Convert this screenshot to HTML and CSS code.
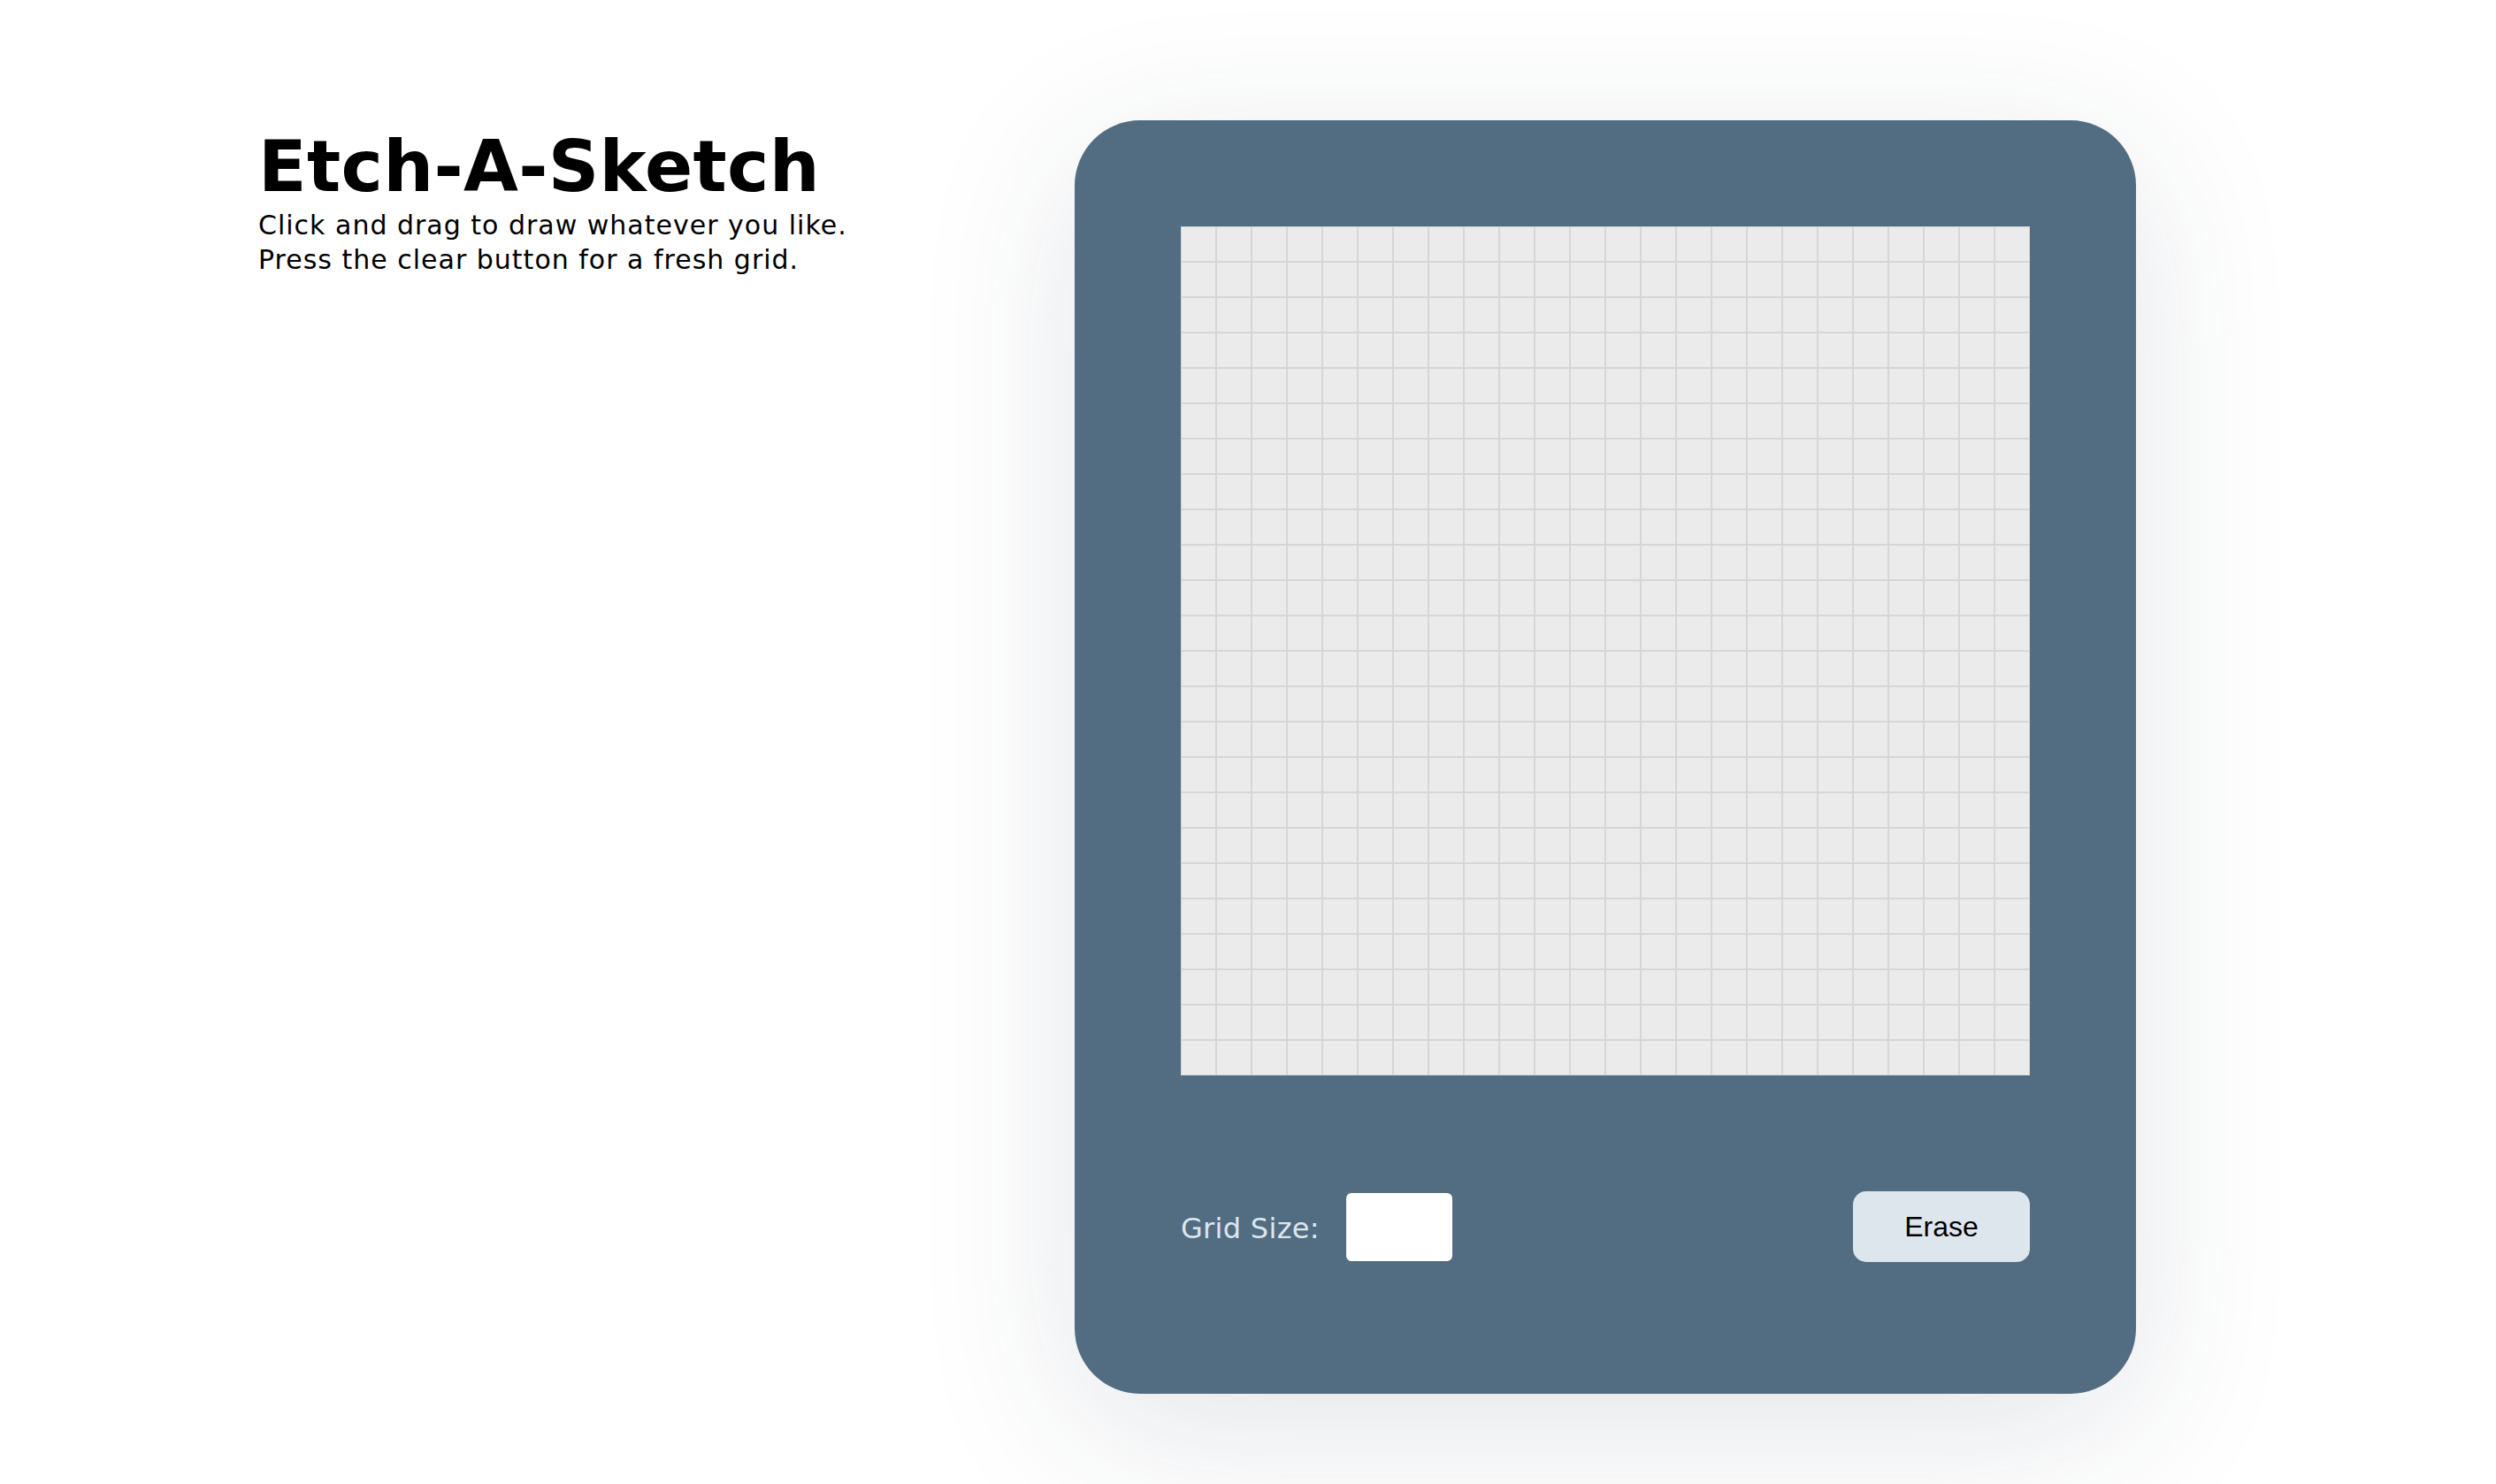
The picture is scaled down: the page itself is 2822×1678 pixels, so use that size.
FILE: index.html
```html
<!DOCTYPE html>
<html>
<head>
  <title>Etch-A-Sketch</title>
  <link rel="stylesheet" href="styles.css">
</head>
<body>
  <div class="page">
    <div class="intro">
      <h1>Etch-A-Sketch</h1>
      <p>Click and drag to draw whatever you like.<br>Press the clear button for a fresh grid.</p>
    </div>

    <div class="sketch-box">
      <div class="grid" id="grid"></div>
      <div class="controls">
        <label for="size">Grid Size:</label>
        <input type="text" id="size">
        <button id="erase">Erase</button>
      </div>
    </div>
  </div>

  <script>
    const grid = document.getElementById('grid');
    let drawing = false;

    function makeGrid(n) {
      grid.innerHTML = '';
      grid.style.gridTemplateColumns = 'repeat(' + n + ', 1fr)';
      for (let i = 0; i < n * n; i++) {
        const cell = document.createElement('div');
        cell.className = 'cell';
        cell.addEventListener('mousedown', () => { drawing = true; cell.classList.add('filled'); });
        cell.addEventListener('mouseover', () => { if (drawing) cell.classList.add('filled'); });
        grid.appendChild(cell);
      }
    }

    document.addEventListener('mouseup', () => drawing = false);

    document.getElementById('erase').addEventListener('click', () => {
      const n = parseInt(document.getElementById('size').value) || 24;
      makeGrid(Math.min(Math.max(n, 1), 100));
    });

    makeGrid(24);
  </script>
</body>
</html>
```

FILE: styles.css
```css
* {
  margin: 0;
  padding: 0;
  box-sizing: border-box;
}

html, body {
  height: 100%;
  overflow: hidden;
}

body {
  font-family: 'DejaVu Sans', Verdana, sans-serif;
  background: #ffffff;
  color: #000;
}

.page {
  display: flex;
  align-items: flex-start;
  min-height: 100vh;
  padding: 136px 0 0 292px;
  gap: 260px;
}

.intro {
  width: 663px;
  flex-shrink: 0;
}

.intro h1 {
  font-size: 80px;
  font-weight: bold;
  letter-spacing: 0.3px;
  margin-top: 6px;
  white-space: nowrap;
}

.intro p {
  font-size: 30px;
  line-height: 39px;
  letter-spacing: 1px;
  white-space: nowrap;
}

.sketch-box {
  width: 1200px;
  padding: 120px 120px 149px;
  background: #526d82;
  border-radius: 74px;
  box-shadow: 0 40px 180px rgba(39, 55, 77, 0.13);
}

.grid {
  width: 960px;
  height: 960px;
  display: grid;
  grid-template-columns: repeat(24, 1fr);
  background: #ebebeb;
}

.cell {
  border: 1px solid #d6d6d6;
  background: #ebebeb;
}

.cell.filled {
  background: #27374d;
}

.controls {
  margin-top: 131px;
  display: flex;
  align-items: center;
}

.controls label {
  font-size: 32px;
  letter-spacing: 0.3px;
  color: #dde6ed;
  margin-right: 30px;
  position: relative;
  top: 2px;
}

.controls input {
  width: 120px;
  height: 77px;
  border: none;
  border-radius: 6px;
  background: #fff;
  font-size: 28px;
  padding: 0 12px;
}

.controls button {
  margin-left: auto;
  width: 200px;
  height: 80px;
  border: none;
  border-radius: 15px;
  background: #dde6ed;
  font-family: 'Liberation Sans', Arial, sans-serif;
  font-size: 32px;
  color: #000;
  cursor: pointer;
}

.controls button:hover {
  background: #9db2bf;
}
```
